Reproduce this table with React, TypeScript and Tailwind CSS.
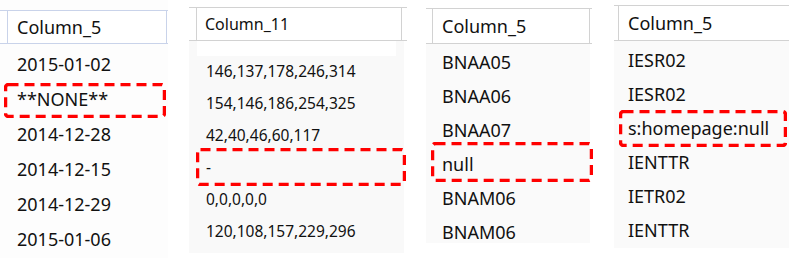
import React from "react";

function DashBox({ left, top, width, height }: { left: number; top: number; width: number; height: number }) {
  return (
    <svg
      className="absolute pointer-events-none"
      style={{ left, top }}
      width={width}
      height={height}
      viewBox={`0 0 ${width} ${height}`}
    >
      <rect
        x={1.5}
        y={1.5}
        width={width - 3}
        height={height - 3}
        rx={3}
        fill="none"
        stroke="#ff0000"
        strokeWidth={3.5}
        strokeDasharray="10 6"
      />
    </svg>
  );
}

const font = { fontFamily: '"Noto Sans", "Open Sans", sans-serif' };

export default function App() {
  const p1 = ["2015-01-02", "**NONE**", "2014-12-28", "2014-12-15", "2014-12-29", "2015-01-06"];
  const p2 = ["146,137,178,246,314", "154,146,186,254,325", "42,40,46,60,117", "-", "0,0,0,0,0", "120,108,157,229,296"];
  const p3 = ["BNAA05", "BNAA06", "BNAA07", "null", "BNAM06", "BNAM06"];
  const p4 = ["IESR02", "IESR02", "s:homepage:null", "IENTTR", "IETR02", "IENTTR"];

  return (
    <div className="relative w-[789px] h-[258px] bg-white flex text-[#111] overflow-hidden" style={font}>
      {/* Panel 1 */}
      <div className="w-[168px] shrink-0 pt-[10px] bg-[#fdfdfd]">
        <div className="flex h-[34px] border-y border-[#c9d3ea] bg-white">
          <div className="w-[8px] border-r border-[#c9d3ea]" />
          <div className="w-[159px] border-r border-[#c9d3ea] pl-[9px] flex items-center text-[18px]">Column_5</div>
        </div>
        <div className="pt-[3px] pl-[17px] text-[18px]">
          {p1.map((t, i) => (
            <div key={i} className="h-[35px] flex items-center">{t}</div>
          ))}
        </div>
      </div>

      {/* Panel 2 */}
      <div className="w-[218px] shrink-0 ml-[21px] pt-[7px]">
        <div className="flex h-[34px] border-y border-[#d2d2d2] bg-white">
          <div className="w-[8px] border-r border-[#d2d2d2]" />
          <div className="w-[205px] border-r border-[#d2d2d2] pl-[8px] flex items-center text-[16px]">Column_11</div>
        </div>
        <div className="bg-[#f9f9f9] h-[212px] mr-[3px]">
          <div className="h-[15px] bg-white mx-[8px]" />
          <div className="pl-[17px] text-[15.5px]">
            {p2.map((t, i) => (
              <div key={i} className="h-[32px] flex items-center">{t}</div>
            ))}
          </div>
        </div>
      </div>

      {/* Panel 3 */}
      <div className="w-[166px] shrink-0 ml-[19px] pt-[8px]">
        <div className="flex h-[36px] border-y border-[#d2d2d2] bg-white">
          <div className="w-[7px] border-r border-[#d2d2d2]" />
          <div className="w-[157px] border-r border-[#d2d2d2] pl-[9px] flex items-center text-[18px]">Column_5</div>
        </div>
        <div className="bg-[#fafafa] h-[199px] w-[164px] pt-[1px] pl-[16px] text-[18px]">
          {p3.map((t, i) => (
            <div key={i} className="h-[34px] flex items-center">{t}</div>
          ))}
        </div>
      </div>

      {/* Panel 4 */}
      <div className="flex-1 ml-[22px] pt-[5px]">
        <div className="flex h-[36px] border-y border-[#d2d2d2] bg-white">
          <div className="w-[5px] border-r border-[#d2d2d2]" />
          <div className="flex-1 pl-[9px] flex items-center text-[18px]">Column_5</div>
        </div>
        <div className="bg-[#fafafa] h-[207px] pt-[2px] pl-[14px] text-[18px]">
          {p4.map((t, i) => (
            <div key={i} className="h-[34px] flex items-center">{t}</div>
          ))}
        </div>
      </div>

      <DashBox left={4} top={83} width={162} height={35} />
      <DashBox left={196} top={148} width={210} height={38} />
      <DashBox left={431} top={142} width={162} height={40} />
      <DashBox left={619} top={110} width={168} height={37} />
    </div>
  );
}
